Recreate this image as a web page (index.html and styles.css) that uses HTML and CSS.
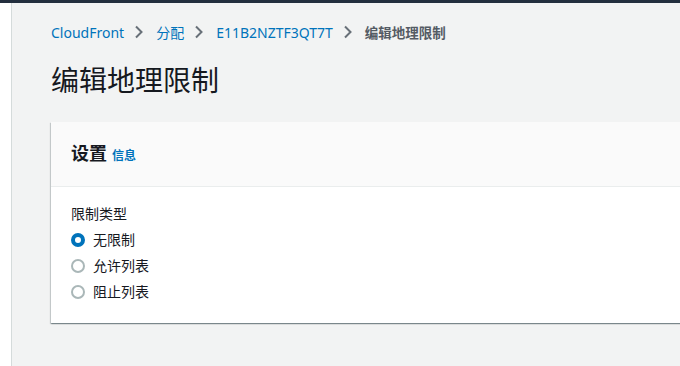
FILE: index.html
```html
<!DOCTYPE html>
<html lang="zh-CN">
<head>
    <meta charset="UTF-8">
    <meta name="viewport" content="width=device-width, initial-scale=1.0">
    <title>编辑地理限制</title>
    <link rel="stylesheet" href="styles.css">
</head>
<body>
    <div class="top-bar"></div>
    <div class="layout">
        <div class="side-nav"></div>
        <div class="main">
            <!-- breadcrumb -->
            <nav class="breadcrumb">
                <a href="#">CloudFront</a>
                <span class="sep"><svg width="10" height="14" viewBox="0 0 10 14"><path d="M2 1.5 L7.5 7 L2 12.5" fill="none" stroke="#687078" stroke-width="2"/></svg></span>
                <a href="#">分配</a>
                <span class="sep"><svg width="10" height="14" viewBox="0 0 10 14"><path d="M2 1.5 L7.5 7 L2 12.5" fill="none" stroke="#687078" stroke-width="2"/></svg></span>
                <a href="#">E11B2NZTF3QT7T</a>
                <span class="sep"><svg width="10" height="14" viewBox="0 0 10 14"><path d="M2 1.5 L7.5 7 L2 12.5" fill="none" stroke="#687078" stroke-width="2"/></svg></span>
                <span class="current">编辑地理限制</span>
            </nav>

            <h1>编辑地理限制</h1>

            <div class="card">
                <div class="card-header">
                    <h2>设置</h2>
                    <a href="#" class="info">信息</a>
                </div>
                <div class="card-body">
                    <div class="field-label">限制类型</div>
                    <div class="radio-group">
                        <label class="radio checked"><span class="dot"></span>无限制</label>
                        <label class="radio"><span class="dot"></span>允许列表</label>
                        <label class="radio"><span class="dot"></span>阻止列表</label>
                    </div>
                </div>
            </div>
        </div>
    </div>
</body>
</html>
```

FILE: styles.css
```css
html, body {
    margin: 0;
    height: 100%;
    overflow: hidden;
}
body {
    font-family: "Noto Sans", "Noto Sans CJK SC", sans-serif;
    font-size: 14px;
    color: #16191f;
    background-color: #f2f3f3;
}
.top-bar {
    height: 3px;
    background-color: #232f3e;
}
.layout {
    display: flex;
    height: calc(100% - 3px);
}
.side-nav {
    width: 11px;
    flex-shrink: 0;
    background-color: #ffffff;
    border-right: 1px solid #d5dbdb;
}
.main {
    flex: 1;
    padding-left: 39px;
}
.breadcrumb {
    display: flex;
    align-items: center;
    height: 22px;
    margin-top: 18px;
    font-size: 14px;
}
.breadcrumb a {
    color: #0073bb;
    text-decoration: none;
}
.breadcrumb .sep {
    display: flex;
    margin: 0 12px 0 10px;
}
.breadcrumb .current {
    color: #545b64;
    font-weight: 700;
    font-size: 13.5px;
}
h1 {
    margin: 19px 0 0 0;
    font-size: 28px;
    font-weight: 400;
    line-height: 36px;
    color: #16191f;
}
.card {
    margin-top: 24px;
    width: calc(100% + 20px);
    background-color: #ffffff;
    box-shadow: 0 1px 1px 0 rgba(0,28,36,0.3), 1px 1px 1px 0 rgba(0,28,36,0.15), -1px 1px 1px 0 rgba(0,28,36,0.15);
}
.card-header {
    display: flex;
    align-items: baseline;
    height: 65px;
    box-sizing: border-box;
    padding: 18px 20px 0 20px;
    background-color: #fafafa;
    border-bottom: 1px solid #eaeded;
}
.card-header h2 {
    margin: 0;
    font-size: 18px;
    font-weight: 700;
    line-height: 26px;
}
.card-header .info {
    margin-left: 5px;
    font-size: 12px;
    color: #0073bb;
    text-decoration: none;
    font-weight: 700;
}
.card-body {
    padding: 17px 20px 21px 20px;
}
.field-label {
    line-height: 20px;
    margin-bottom: 6px;
}
.radio-group {
    display: flex;
    flex-direction: column;
    gap: 6px;
}
.radio {
    display: flex;
    align-items: center;
    line-height: 20px;
}
.radio .dot {
    width: 10px;
    height: 10px;
    border: 2px solid #aab7b8;
    border-radius: 50%;
    margin-right: 8px;
    background-color: #ffffff;
}
.radio.checked .dot {
    width: 6px;
    height: 6px;
    border: 4px solid #0073bb;
}
```
